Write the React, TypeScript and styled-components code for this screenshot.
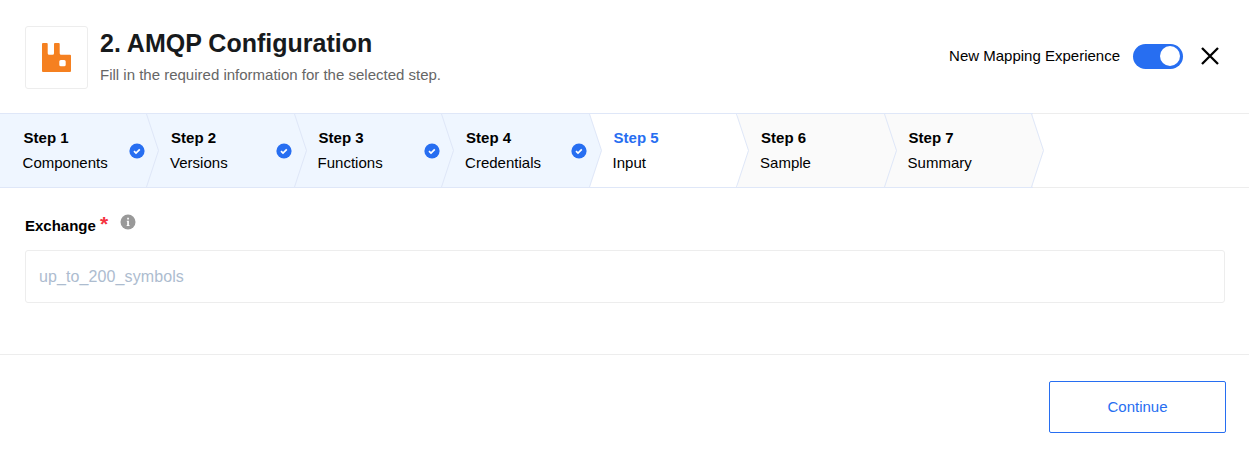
import React from "react";
import styled, { createGlobalStyle } from "styled-components";

const GlobalStyle = createGlobalStyle`
  *, *::before, *::after { box-sizing: border-box; }
  body { margin: 0; background: #fff; color: #000; font-family: "Liberation Sans", Arial, sans-serif; font-size: 15px; }
`;

const Page = styled.main`
  display: flex;
  flex-direction: column;
  height: 452px;
  overflow: hidden;
`;

const Header = styled.header`
  display: flex;
  align-items: flex-start;
  height: 113px;
  padding: 26px 30px 0 25px;
`;

const LogoBox = styled.div`
  display: flex;
  align-items: center;
  justify-content: center;
  width: 63px;
  height: 63px;
  border: 1px solid #ededed;
  border-radius: 3px;
`;

const LogoMark = styled.svg`
  display: block;
`;

const Heading = styled.div`
  flex: 1;
  margin-left: 12px;
`;

const Title = styled.h1`
  margin: 2px 0 0;
  font-size: 25px;
  line-height: 30px;
  font-weight: 700;
  color: #171a1c;
`;

const Subtitle = styled.p`
  margin: 7px 0 0;
  line-height: 20px;
  color: #666;
`;

const Actions = styled.div`
  display: flex;
  align-items: center;
  height: 60px;
`;

const ToggleLabel = styled.span`
  padding-bottom: 2px;
`;

const Toggle = styled.button`
  display: flex;
  justify-content: flex-end;
  align-items: center;
  width: 50px;
  height: 25px;
  margin: 0 18px 0 13px;
  padding: 0 3px;
  border: 0;
  border-radius: 13px;
  background: #276ef1;
`;

const Knob = styled.span`
  width: 20px;
  height: 20px;
  border-radius: 50%;
  background: #fff;
`;

const IconButton = styled.button`
  display: flex;
  padding: 0;
  border: 0;
  background: none;
`;

const Steps = styled.nav`
  display: flex;
  height: 75px;
  border-top: 1px solid #ededed;
  border-bottom: 1px solid #ededed;
`;

type StepState = "done" | "active" | "pending";
const fills: Record<StepState, string> = { done: "#eff6ff", active: "#ffffff", pending: "#fafafa" };

const StepItem = styled.div<{ $state: StepState; $order: number }>`
  position: relative;
  z-index: ${(p) => p.$order};
  display: flex;
  align-items: center;
  width: 147.5px;
  height: 75px;
  margin-top: -1px;
  padding: 0 3px 0 22.6px;
  border-top: 1px solid #dfe7f8;
  border-bottom: 1px solid #dfe7f8;
  background: ${(p) => fills[p.$state]};
`;

const StepText = styled.div`
  flex: 1;
  padding-bottom: 2px;
  line-height: 25px;
`;

const StepNumber = styled.div<{ $active: boolean }>`
  padding-left: 1px;
  font-weight: 700;
  color: ${(p) => (p.$active ? "#276ef1" : "#000")};
`;

const Arrow = styled.svg`
  position: absolute;
  top: 0;
  left: 100%;
  margin-left: -2.3px;
`;

const CheckIcon = styled.svg`
  margin-top: 1px;
`;

const Form = styled.section`
  height: 167px;
  padding: 25px 24px 0 25px;
  border-bottom: 1px solid #ededed;
`;

const Label = styled.label`
  display: flex;
  align-items: flex-start;
  height: 37px;
  line-height: 26px;
  font-weight: 700;
`;

const Required = styled.span`
  margin: -2px 12px 0 4px;
  font-size: 21px;
  color: #f5333f;
`;

const InfoIcon = styled.svg`
  margin-top: 1px;
`;

const Input = styled.input`
  display: block;
  width: 100%;
  height: 53px;
  padding: 0 13px;
  border: 1px solid #ededed;
  border-radius: 3px;
  font: 16px "Liberation Sans", Arial, sans-serif;
  letter-spacing: 0.1px;
  &::placeholder { color: #adbccf; opacity: 1; }
`;

const Footer = styled.footer`
  display: flex;
  justify-content: flex-end;
  padding: 26px 23px 0;
`;

const Continue = styled.button`
  width: 177px;
  height: 52px;
  padding: 0 0 2px;
  border: 1px solid #276ef1;
  border-radius: 2px;
  background: #fff;
  color: #276ef1;
  font: 15px "Liberation Sans", Arial, sans-serif;
`;

const steps: { label: string; state: StepState }[] = [
  { label: "Components", state: "done" },
  { label: "Versions", state: "done" },
  { label: "Functions", state: "done" },
  { label: "Credentials", state: "done" },
  { label: "Input", state: "active" },
  { label: "Sample", state: "pending" },
  { label: "Summary", state: "pending" },
];

export default function App() {
  return (
    <Page>
      <GlobalStyle />
      <Header>
        <LogoBox>
          <LogoMark width="29" height="29" viewBox="0 0 29 29">
            <path
              fill="#f58020"
              fillRule="evenodd"
              d="M1 0h3.700q1 0 1 1v9.200q0 1.500 1.500 1.500h3.300q1.500 0 1.500-1.500V1q0-1 1-1h3.700q1 0 1 1v9.200q0 1.500 1.500 1.500H28q1 0 1 1V28q0 1-1 1H1q-1 0-1-1V1q0-1 1-1zM18.800 17q-1.500 0-1.500 1.500v3.300q0 1.500 1.500 1.500h3.400q1.500 0 1.500-1.500v-3.300q0-1.500-1.500-1.500z"
            />
          </LogoMark>
        </LogoBox>
        <Heading>
          <Title>2. AMQP Configuration</Title>
          <Subtitle>Fill in the required information for the selected step.</Subtitle>
        </Heading>
        <Actions>
          <ToggleLabel>New Mapping Experience</ToggleLabel>
          <Toggle aria-label="New Mapping Experience">
            <Knob />
          </Toggle>
          <IconButton aria-label="Close">
            <svg width="18" height="18" viewBox="0 0 18 18" stroke="#000" strokeWidth="2.3">
              <path d="M1 1l16 16M17 1l-16 16" />
            </svg>
          </IconButton>
        </Actions>
      </Header>
      <Steps>
        {steps.map((step, i) => (
          <StepItem key={step.label} $state={step.state} $order={steps.length - i}>
            <StepText>
              <StepNumber $active={step.state === "active"}>Step {i + 1}</StepNumber>
              {step.label}
            </StepText>
            {step.state === "done" && (
              <CheckIcon width="16" height="16" viewBox="0 0 16 16">
                <circle cx="8" cy="8" r="7.600" fill="#276ef1" />
                <path d="M5 8.100l2 2 3.800-3.800" fill="none" stroke="#fff" strokeWidth="1.700" />
              </CheckIcon>
            )}
            <Arrow width="15" height="73" viewBox="0 0 15 73">
              <path d="M0 0h1.500l12 36.500-12 36.500H0z" fill={fills[step.state]} />
              <path d="M1.500 0l12 36.500-12 36.500" fill="none" stroke="#dfe7f8" />
            </Arrow>
          </StepItem>
        ))}
      </Steps>
      <Form>
        <Label htmlFor="exchange">
          Exchange
          <Required>*</Required>
          <InfoIcon width="16" height="16" viewBox="0 0 16 16">
            <circle cx="8" cy="8" r="7.500" fill="#999" />
            <path d="M7.200 3.800h1.700v1.700H7.200zM6.800 6.800h2.100v4.300h.6v1H6.700v-1h.5V7.700h-.4z" fill="#fff" />
          </InfoIcon>
        </Label>
        <Input id="exchange" placeholder="up_to_200_symbols" />
      </Form>
      <Footer>
        <Continue>Continue</Continue>
      </Footer>
    </Page>
  );
}
